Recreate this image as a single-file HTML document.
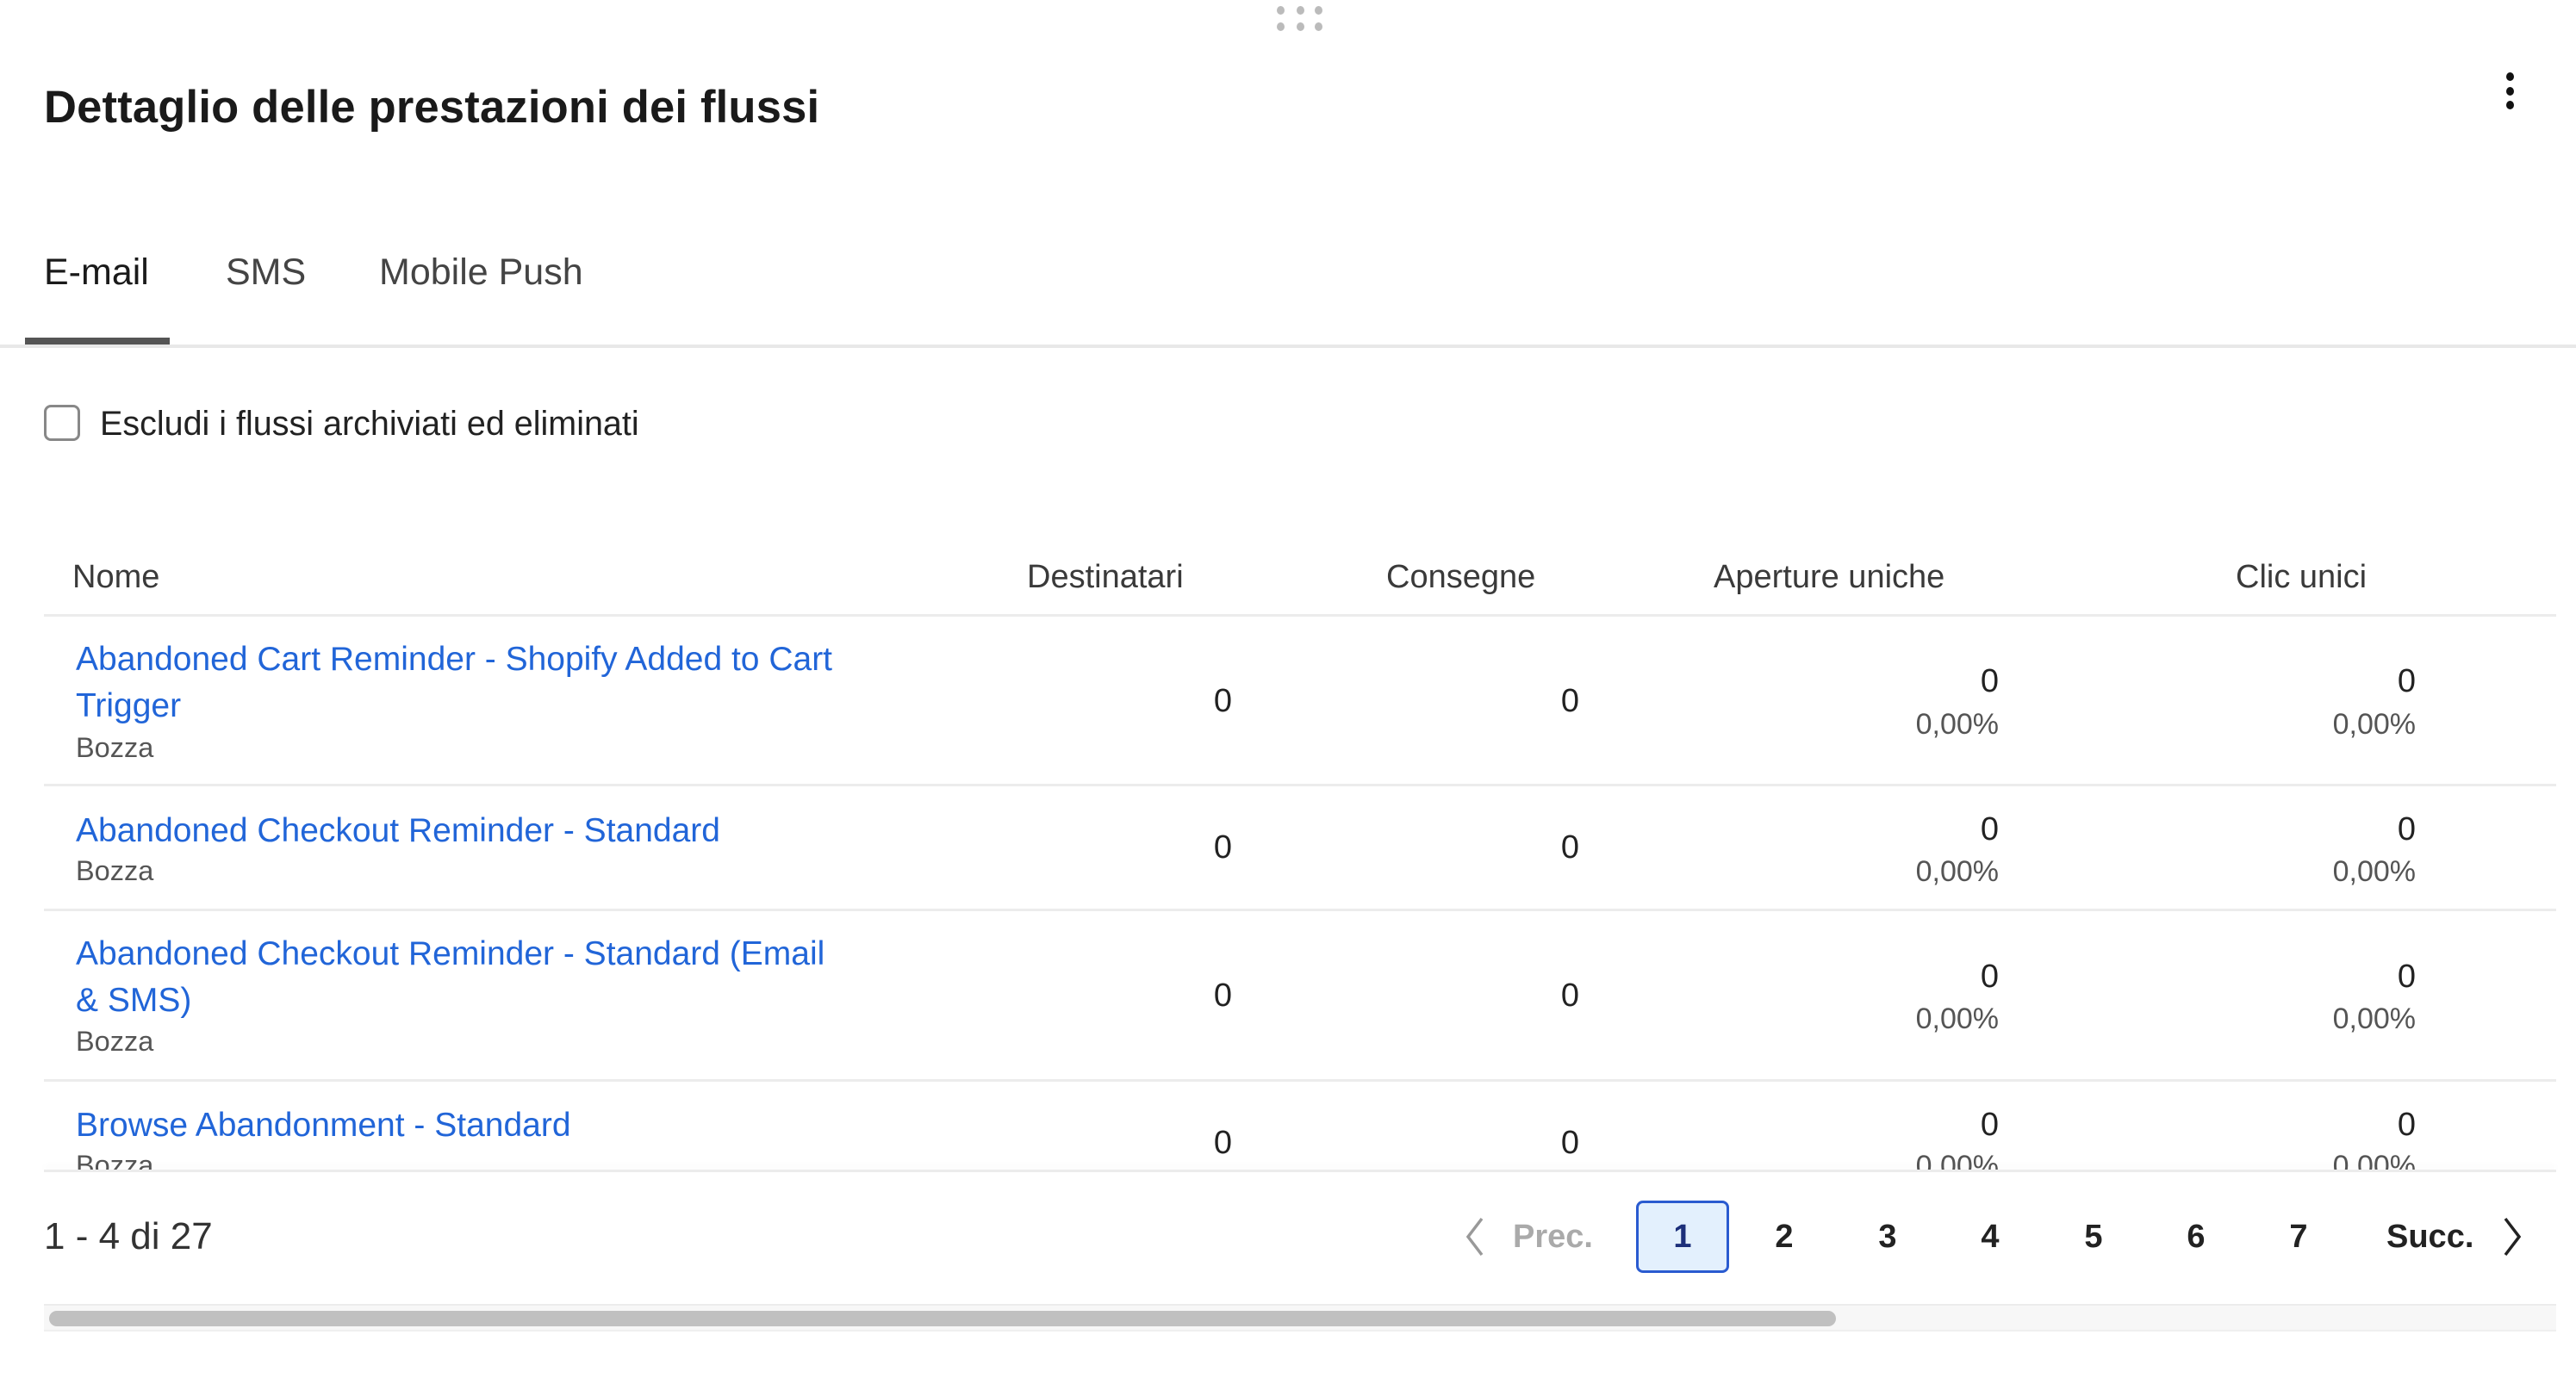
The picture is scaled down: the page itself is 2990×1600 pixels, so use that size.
<!DOCTYPE html>
<html><head><meta charset="utf-8"><style>
*{margin:0;padding:0;box-sizing:border-box}
html,body{width:2990px;height:1600px;overflow:hidden}
body{background:#fff;font-family:"Liberation Sans",sans-serif;color:#222;position:relative}
.a{position:absolute;white-space:nowrap}
.dot{position:absolute;width:9px;height:10px;border-radius:50%}
.h{font-size:38px;color:#3a3a3a;line-height:44px}
.lk{font-size:39px;color:#2165d8;line-height:54px}
.bz{font-size:32.5px;color:#555;line-height:36px}
.v{font-size:38px;color:#222;line-height:44px;text-align:right}
.p{font-size:34px;color:#555;line-height:36px;text-align:right}
.sep{position:absolute;left:51px;width:2916px;height:3px;background:#ececec}
.pg{font-size:38px;font-weight:bold;color:#222;line-height:44px;text-align:center;width:60px}
</style></head><body>
<div class="dot" style="left:1482px;top:7px;background:#bbb"></div>
<div class="dot" style="left:1505px;top:7px;background:#bbb"></div>
<div class="dot" style="left:1526px;top:7px;background:#bbb"></div>
<div class="dot" style="left:1482px;top:26px;background:#bbb"></div>
<div class="dot" style="left:1505px;top:26px;background:#bbb"></div>
<div class="dot" style="left:1526px;top:26px;background:#bbb"></div>
<div class="dot" style="left:2909px;top:84px;background:#111"></div>
<div class="dot" style="left:2909px;top:101px;background:#111"></div>
<div class="dot" style="left:2909px;top:117px;background:#111"></div>

<div class="a" style="left:51px;top:95px;font-size:52.5px;font-weight:bold;color:#1a1a1a;line-height:60px;letter-spacing:0.2px">Dettaglio delle prestazioni dei flussi</div>

<div class="a" style="left:51px;top:291px;font-size:43px;color:#1a1a1a;line-height:50px">E-mail</div>
<div class="a" style="left:262px;top:291px;font-size:43px;color:#444;line-height:50px">SMS</div>
<div class="a" style="left:440px;top:291px;font-size:43px;color:#444;line-height:50px">Mobile Push</div>
<div class="a" style="left:0;top:400px;width:2990px;height:4px;background:#e8e8e8"></div>
<div class="a" style="left:29px;top:392px;width:168px;height:8px;background:#555"></div>

<div class="a" style="left:51px;top:470px;width:42px;height:42px;border:3px solid #888;border-radius:8px"></div>
<div class="a" style="left:116px;top:469px;font-size:39.5px;color:#222;line-height:46px">Escludi i flussi archiviati ed eliminati</div>

<div class="a h" style="left:84px;top:648px">Nome</div>
<div class="a h" style="left:1192px;top:648px">Destinatari</div>
<div class="a h" style="left:1609px;top:648px">Consegne</div>
<div class="a h" style="left:1989px;top:648px">Aperture uniche</div>
<div class="a h" style="left:2595px;top:648px">Clic unici</div>
<div class="sep" style="top:713px"></div>

<div class="a" style="left:0;top:716px;width:2990px;height:644px;overflow:hidden">
 <div style="position:absolute;left:0;top:-716px;width:2990px;height:1360px">
  <div class="a lk" style="left:88px;top:739px">Abandoned Cart Reminder - Shopify Added to Cart</div>
  <div class="a lk" style="left:88px;top:793px">Trigger</div>
  <div class="a bz" style="left:88px;top:850px">Bozza</div>
  <div class="a v" style="right:1560px;top:792px">0</div>
  <div class="a v" style="right:1157px;top:792px">0</div>
  <div class="a v" style="right:670px;top:769px">0</div>
  <div class="a p" style="right:670px;top:823px">0,00%</div>
  <div class="a v" style="right:186px;top:769px">0</div>
  <div class="a p" style="right:186px;top:823px">0,00%</div>
  <div class="sep" style="top:910px"></div>

  <div class="a lk" style="left:88px;top:938px">Abandoned Checkout Reminder - Standard</div>
  <div class="a bz" style="left:88px;top:993px">Bozza</div>
  <div class="a v" style="right:1560px;top:962px">0</div>
  <div class="a v" style="right:1157px;top:962px">0</div>
  <div class="a v" style="right:670px;top:941px">0</div>
  <div class="a p" style="right:670px;top:994px">0,00%</div>
  <div class="a v" style="right:186px;top:941px">0</div>
  <div class="a p" style="right:186px;top:994px">0,00%</div>
  <div class="sep" style="top:1055px"></div>

  <div class="a lk" style="left:88px;top:1081px">Abandoned Checkout Reminder - Standard (Email</div>
  <div class="a lk" style="left:88px;top:1135px">&amp; SMS)</div>
  <div class="a bz" style="left:88px;top:1191px">Bozza</div>
  <div class="a v" style="right:1560px;top:1134px">0</div>
  <div class="a v" style="right:1157px;top:1134px">0</div>
  <div class="a v" style="right:670px;top:1112px">0</div>
  <div class="a p" style="right:670px;top:1165px">0,00%</div>
  <div class="a v" style="right:186px;top:1112px">0</div>
  <div class="a p" style="right:186px;top:1165px">0,00%</div>
  <div class="sep" style="top:1253px"></div>

  <div class="a lk" style="left:88px;top:1280px">Browse Abandonment - Standard</div>
  <div class="a bz" style="left:88px;top:1335px">Bozza</div>
  <div class="a v" style="right:1560px;top:1305px">0</div>
  <div class="a v" style="right:1157px;top:1305px">0</div>
  <div class="a v" style="right:670px;top:1284px">0</div>
  <div class="a p" style="right:670px;top:1336px">0,00%</div>
  <div class="a v" style="right:186px;top:1284px">0</div>
  <div class="a p" style="right:186px;top:1336px">0,00%</div>
 </div>
</div>
<div class="sep" style="top:1358px;box-shadow:0 -4px 8px rgba(0,0,0,0.04)"></div>

<div class="a" style="left:51px;top:1411px;font-size:44px;color:#333;line-height:50px">1 - 4 di 27</div>
<svg class="a" style="left:1696px;top:1412px" width="30" height="48" viewBox="0 0 30 48"><path d="M24 3 L8 24 L24 45" fill="none" stroke="#999" stroke-width="3.5"/></svg>
<div class="a" style="left:1756px;top:1414px;font-size:38px;font-weight:bold;color:#aaa;line-height:44px">Prec.</div>
<div class="a" style="left:1899px;top:1394px;width:108px;height:84px;border:3px solid #2a5bd0;border-radius:8px;background:#e3f0fd"></div>
<div class="a pg" style="left:1923px;top:1414px;color:#1c2f7a">1</div>
<div class="a pg" style="left:2041px;top:1414px">2</div>
<div class="a pg" style="left:2161px;top:1414px">3</div>
<div class="a pg" style="left:2280px;top:1414px">4</div>
<div class="a pg" style="left:2400px;top:1414px">5</div>
<div class="a pg" style="left:2519px;top:1414px">6</div>
<div class="a pg" style="left:2638px;top:1414px">7</div>
<div class="a" style="left:2770px;top:1414px;font-size:38px;font-weight:bold;color:#222;line-height:44px">Succ.</div>
<svg class="a" style="left:2902px;top:1412px" width="30" height="48" viewBox="0 0 30 48"><path d="M6 3 L22 24 L6 45" fill="none" stroke="#222" stroke-width="3.5"/></svg>

<div class="a" style="left:51px;top:1514px;width:2916px;height:32px;background:#f7f7f7;border-top:2px solid #ececec;border-bottom:2px solid #efefef"></div>
<div class="a" style="left:57px;top:1522px;width:2074px;height:18px;background:#c0c0c0;border-radius:9px"></div>
</body></html>
